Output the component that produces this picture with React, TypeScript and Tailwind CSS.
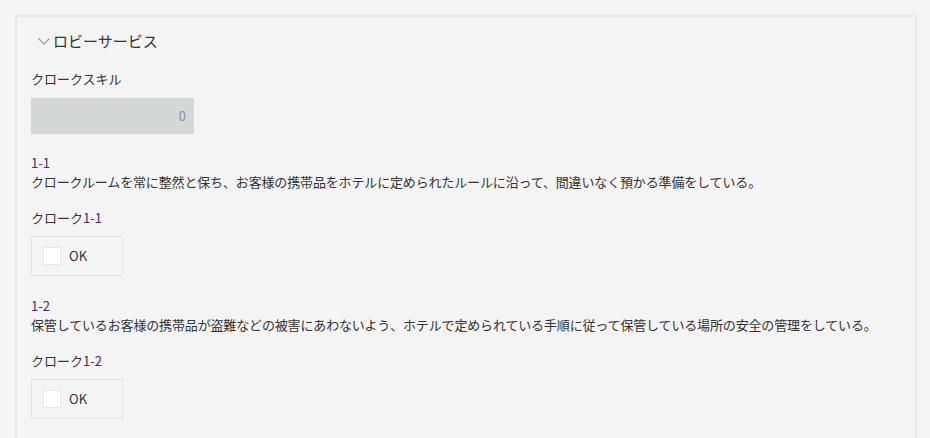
import React from "react";

const font = { fontFamily: '"Noto Sans CJK JP", "Noto Sans", sans-serif' };

function Item({ num, desc }: { num: string; desc: string }) {
  return (
    <div className="flex flex-col">
      <div className="text-[13px] leading-[21px] text-[#4d2a58]">{num}</div>
      <div className="mt-[-2px] text-[13px] leading-[21px] tracking-[-0.15px] text-[#333]">{desc}</div>
      <div className="mt-[15px] text-[13px] leading-[21px] text-[#333]">
        クローク<span className="text-[#4d2a58]">{num}</span>
      </div>
      <div className="mt-[8px] flex h-[40px] w-[92px] items-center border border-[#e3e3e3] pl-[11px]">
        <div className="h-[18px] w-[18px] border border-[#e6e6e6] bg-white" />
        <span className="ml-[8px] text-[13px] text-[#333]">OK</span>
      </div>
    </div>
  );
}

export default function App() {
  return (
    <div className="h-[438px] w-[930px] overflow-hidden bg-[#f4f4f4] pl-[15px] pt-[15px]" style={font}>
      <div className="h-[440px] w-[902px] border-2 border-[#e8e8e8] bg-[#f4f4f4] pl-[14px] pt-[13px]">
        <div className="flex items-center">
          <svg width="14" height="10" viewBox="0 0 14 10" className="ml-[6px]">
            <path d="M1.5 2.5 L7 8 L12.5 2.5" fill="none" stroke="#999" strokeWidth="1.2" />
          </svg>
          <span className="ml-[2px] text-[15px] leading-[22px] text-[#333]">ロビーサービス</span>
        </div>
        <div className="mt-[17px] text-[13px] leading-[20px] text-[#333]">クロークスキル</div>
        <div className="mt-[9px] flex h-[36px] w-[163px] items-center justify-end bg-[#d6d8d8] pr-[8px] text-[13px] text-[#8b909a]">
          0
        </div>
        <div className="mt-[18px] flex flex-col gap-[19px]">
          <Item
            num="1-1"
            desc="クロークルームを常に整然と保ち、お客様の携帯品をホテルに定められたルールに沿って、間違いなく預かる準備をしている。"
          />
          <Item
            num="1-2"
            desc="保管しているお客様の携帯品が盗難などの被害にあわないよう、ホテルで定められている手順に従って保管している場所の安全の管理をしている。"
          />
        </div>
      </div>
    </div>
  );
}
